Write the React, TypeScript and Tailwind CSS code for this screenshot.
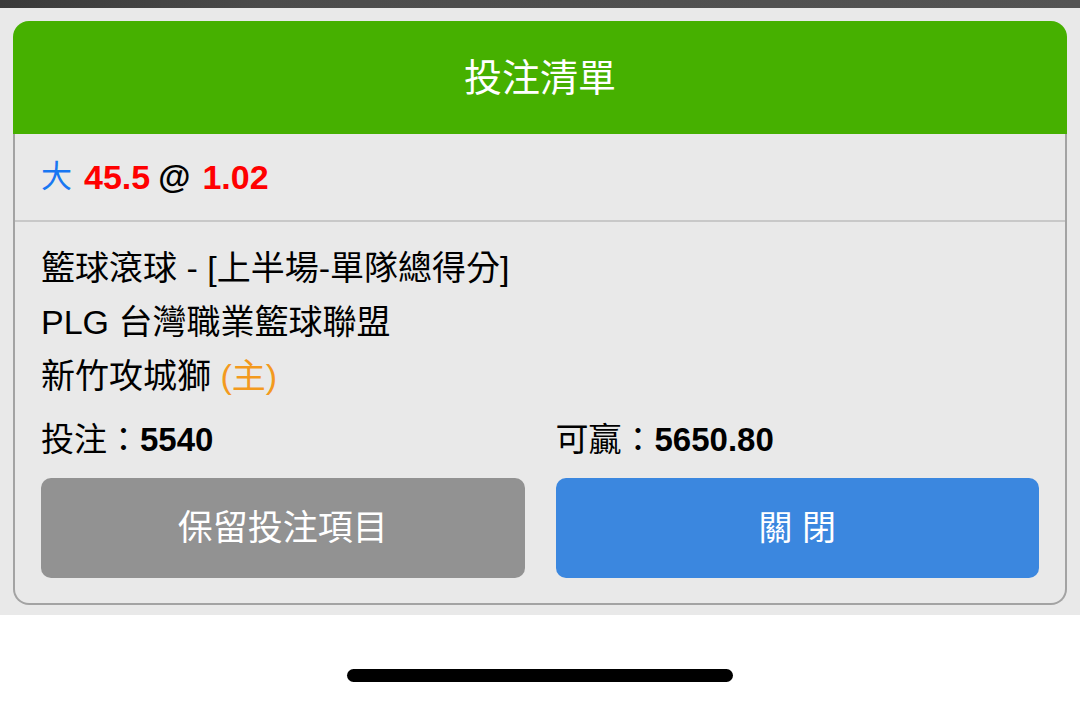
const font = { fontFamily: '"Liberation Sans", "Noto Sans CJK TC", sans-serif' };

export default function App() {
  return (
    <div className="w-[1080px] h-[702px] bg-white flex flex-col overflow-hidden" style={font}>
      <div className="h-2 flex shrink-0">
        <div className="w-[260px] bg-gradient-to-r from-[#3a3a3a] to-[#4a4a4a]" />
        <div className="flex-1 bg-gradient-to-r from-[#4c4c4c] to-[#545454]" />
      </div>
      <div className="bg-[#e9e9e9] px-[13px] pt-[13px] pb-[10px]">
        <div className="h-[113px] rounded-t-[16px] bg-[#46b000] flex items-center justify-center">
          <span className="text-[38px] text-white leading-none">投注清單</span>
        </div>
        <div className="border-x-2 border-b-2 border-[#a3a3a3] rounded-b-[16px]">
          <div className="h-[88px] px-[26px] flex items-center border-b-2 border-[#c8c8c8]">
            <span className="text-[31px] text-[#1877f2]">大</span>
            <span className="ml-[12px] text-[34px] font-bold text-[#ff0000]">45.5</span>
            <span className="ml-[8px] text-[33px] font-bold text-black">@</span>
            <span className="ml-[12px] text-[34px] font-bold text-[#ff0000]">1.02</span>
          </div>
          <div className="px-[26px] pt-[19px] pb-[25px] text-black">
            <div className="text-[34px] leading-[54px]">籃球滾球 - [上半場-單隊總得分]</div>
            <div className="text-[34px] leading-[54px]">PLG 台灣職業籃球聯盟</div>
            <div className="text-[34px] leading-[54px]">
              新竹攻城獅 <span className="text-[#f39a1e]">(主)</span>
            </div>
            <div className="mt-[10px] grid grid-cols-2 gap-[31px] text-[33px] leading-[54px]">
              <div>
                投注：<span className="font-bold">5540</span>
              </div>
              <div>
                可贏：<span className="font-bold">5650.80</span>
              </div>
            </div>
            <div className="mt-[11px] grid grid-cols-2 gap-[31px]">
              <button className="h-[100px] rounded-[10px] bg-[#929292] text-white text-[35px]">
                保留投注項目
              </button>
              <button className="h-[100px] rounded-[10px] bg-[#3b87df] text-white text-[34px]">
                關 閉
              </button>
            </div>
          </div>
        </div>
      </div>
      <div className="mt-[54px] mx-auto w-[386px] h-[13px] rounded-full bg-black" />
    </div>
  );
}
